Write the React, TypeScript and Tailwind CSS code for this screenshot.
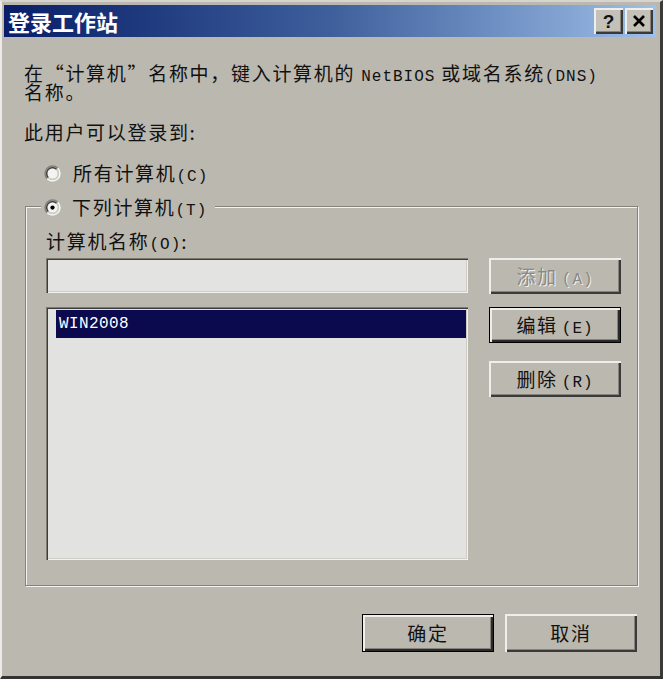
import React from 'react';

const cjk = "font-['Noto_Sans_CJK_SC',sans-serif]";
const mono = "font-['Liberation_Mono','Noto_Sans_CJK_SC',monospace] text-[16px] tracking-[1px] leading-none";

const raised =
  'shadow-[inset_2px_2px_0_#efeeea,inset_-2px_-2px_0_#3a3a3a,inset_-3px_-3px_0_#86837c]';
const raisedDefault =
  'shadow-[inset_0_0_0_1px_#000,inset_3px_3px_0_#efeeea,inset_-3px_-3px_0_#2a2a2a,inset_-4px_-4px_0_#86837c]';
const sunken =
  'shadow-[inset_1px_1px_0_#7d7a73,inset_2px_2px_0_#3c3c3c,inset_-1px_-1px_0_#f2f2f0,inset_-2px_-2px_0_#cfccc5]';

interface RadioProps {
  checked?: boolean;
}

const Radio: React.FC<RadioProps> = ({ checked }) => (
  <svg width="17" height="17" viewBox="0 0 16 16" className="shrink-0">
    <circle cx="8" cy="8" r="5" fill="#f3f3f1" />
    <path d="M3.05 12.95 A7 7 0 0 1 12.95 3.05" stroke="#85827b" strokeWidth="1.5" fill="none" />
    <path d="M12.95 3.05 A7 7 0 0 1 3.05 12.95" stroke="#f6f6f4" strokeWidth="1.5" fill="none" />
    <path d="M4.11 11.89 A5.5 5.5 0 0 1 11.89 4.11" stroke="#3a3a3a" strokeWidth="1.3" fill="none" />
    <path d="M11.89 4.11 A5.5 5.5 0 0 1 4.11 11.89" stroke="#d2cfc8" strokeWidth="1.3" fill="none" />
    {checked && <circle cx="8" cy="8" r="2" fill="#000" />}
  </svg>
);

interface ButtonProps {
  label: string;
  hotkey?: string;
  isDefault?: boolean;
  disabled?: boolean;
  height: string;
}

const WinButton: React.FC<ButtonProps> = ({ label, hotkey, isDefault, disabled, height }) => (
  <button
    className={`w-[132px] ${height} flex items-center justify-center bg-[#bbb8b0] ${
      isDefault ? raisedDefault : raised
    } ${disabled ? 'text-[#8c8982] [text-shadow:1px_1px_0_#f0f0ee]' : 'text-[#111]'}`}
  >
    <span className="block h-[20px] text-[19px] tracking-[1.7px] leading-[20px] whitespace-nowrap">
      {label}
      {hotkey && <span className={`${mono} ml-[4px]`}>({hotkey})</span>}
    </span>
  </button>
);

export default function App() {
  return (
    <div
      className={`${cjk} w-[663px] h-[679px] flex flex-col bg-[#bbb8b0] text-[#111] border-l-2 border-t-2 border-l-[#ecebe7] border-t-[#d6d4cf] border-r-[3px] border-b-[3px] border-r-[#3a3a3a] border-b-[#333] pt-[3px] pl-[2px] pr-[4px]`}
    >
      {/* title bar */}
      <div className="h-[32px] flex items-center bg-linear-to-r from-[#0a1d68] via-[#3f5f9c] to-[#9fc0e8] pr-[3px]">
        <div className="flex-1 ml-[4px] text-white text-[22px] font-bold leading-none">登录工作站</div>
        <div className={`w-[29px] h-[26px] bg-[#c4c1b9] flex items-center justify-center ${raised}`}>
          <span className="font-['Liberation_Sans',sans-serif] font-bold text-[19px] leading-none">?</span>
        </div>
        <div className={`w-[28px] h-[26px] ml-[2px] bg-[#c4c1b9] flex items-center justify-center ${raised}`}>
          <svg width="14" height="12" viewBox="0 0 14 12">
            <path d="M2 1 L12 11 M12 1 L2 11" stroke="#000" strokeWidth="2.6" />
          </svg>
        </div>
      </div>

      <div className="pl-[20px] pr-[18px] text-[19px] tracking-[1.7px]">
        <div className="mt-[26px] h-[19px] leading-[19px] whitespace-nowrap">
          在“计算机”名称中，键入计算机的 <span className={mono}>NetBIOS</span> 或域名系统
          <span className={mono}>(DNS)</span>
        </div>
        <div className="h-[19px] leading-[19px]">名称。</div>
        <div className="mt-[21px] h-[19px] leading-[19px]">此用户可以登录到:</div>

        <div className="mt-[22px] h-[20px] pl-[20px] flex items-center">
          <Radio />
          <span className="ml-[12px] h-[20px] leading-[20px] whitespace-nowrap">
            所有计算机<span className={mono}>(C)</span>
          </span>
        </div>

        <div className="relative mt-[23px] ml-[1px] h-[380px] border border-[#86837c] shadow-[1px_1px_0_#f2f2f0,inset_1px_1px_0_#f2f2f0]">
          <div className="absolute -top-[10px] left-[15px] h-[20px] px-[3px] pr-[8px] bg-[#bbb8b0] flex items-center">
            <Radio checked />
            <span className="ml-[11px] h-[20px] leading-[20px] whitespace-nowrap">
              下列计算机<span className={mono}>(T)</span>
            </span>
          </div>

          <div className="pl-[20px] pt-[23px]">
            <div className="h-[21px] leading-[21px]">
              计算机名称<span className={mono}>(O)</span>:
            </div>
            <div className="flex mt-[7px]">
              <div className="w-[422px] flex flex-col">
                <div className={`h-[35px] bg-[#e3e3e1] ${sunken}`} />
                <div className={`mt-[14px] h-[253px] bg-[#e2e2e0] ${sunken} pl-[10px] pr-[2px] pt-[3px]`}>
                  <div className="h-[28px] bg-[#0b0a4e] text-white flex items-center pl-[3px]">
                    <span className="font-['Liberation_Mono',monospace] text-[16px] tracking-[0.4px] leading-none">
                      WIN2008
                    </span>
                  </div>
                </div>
              </div>
              <div className="ml-[21px] flex flex-col">
                <WinButton label="添加" hotkey="A" disabled height="h-[36px]" />
                <div className="mt-[13px]">
                  <WinButton label="编辑" hotkey="E" isDefault height="h-[36px]" />
                </div>
                <div className="mt-[18px]">
                  <WinButton label="删除" hotkey="R" height="h-[36px]" />
                </div>
              </div>
            </div>
          </div>
        </div>

        <div className="mt-[28px] flex justify-end gap-[11px] pr-[1px]">
          <WinButton label="确定" isDefault height="h-[38px]" />
          <WinButton label="取消" height="h-[38px]" />
        </div>
      </div>
    </div>
  );
}
